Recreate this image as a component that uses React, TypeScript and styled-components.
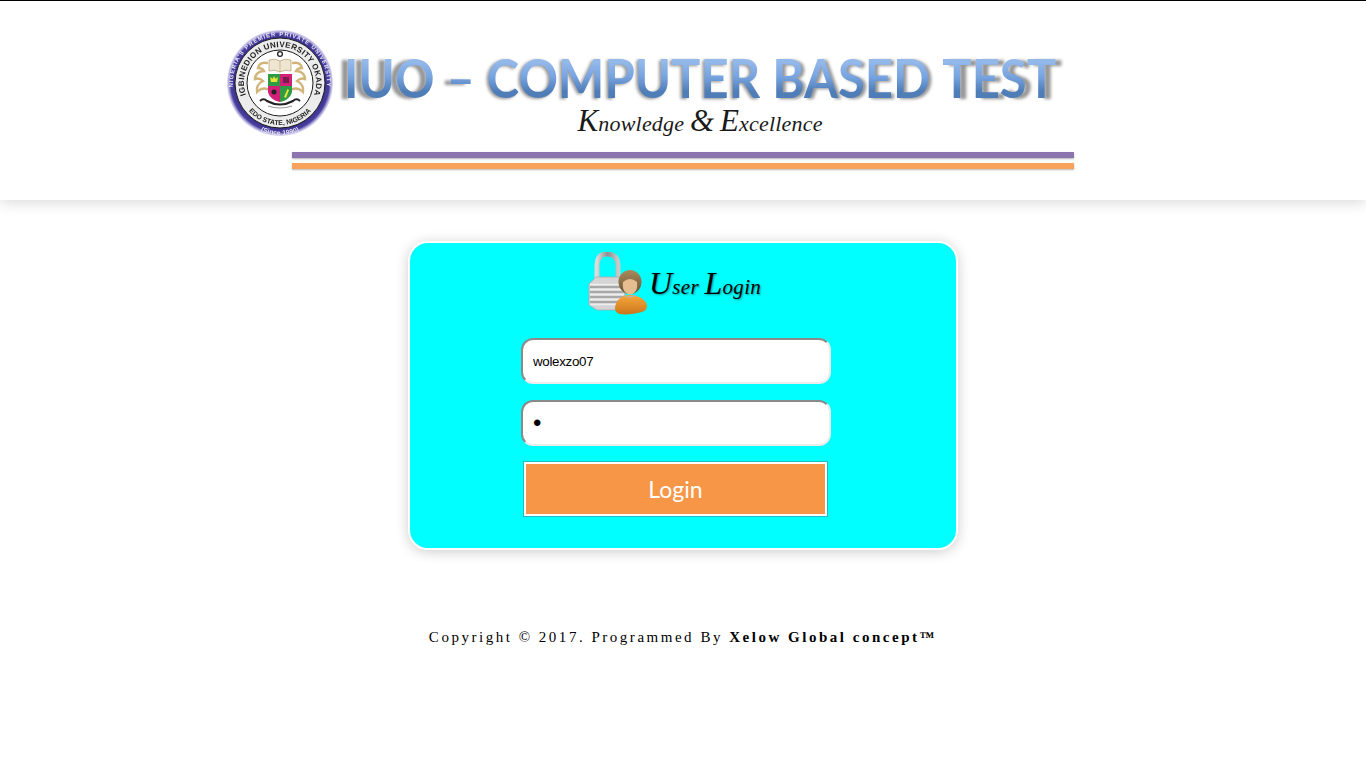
import React from 'react';
import styled, { createGlobalStyle } from 'styled-components';

const GlobalStyle = createGlobalStyle`
  html, body {
    margin: 0;
    padding: 0;
    background: #fff;
  }
  body {
    font-family: "Liberation Sans", Arial, sans-serif;
  }
`;

const Page = styled.div`
  min-height: 768px;
  border-top: 1px solid #000;
  box-sizing: border-box;
  overflow: hidden;
`;

const Header = styled.header`
  height: 199px;
  box-sizing: border-box;
  padding: 29px 0 0 227px;
  background: #fff;
  box-shadow: 0 2px 14px rgba(0, 0, 0, 0.16);
`;

const BannerRow = styled.div`
  display: flex;
  align-items: flex-start;
  gap: 11px;
`;

const TitleColumn = styled.div`
  display: flex;
  flex-direction: column;
  align-items: center;
  height: 117px;
  padding-top: 25px;
  box-sizing: border-box;
`;

const Title = styled.h1`
  display: flex;
  gap: 12px;
  margin: 0;
  font-family: Lato, "Open Sans", sans-serif;
  font-size: 49px;
  font-weight: 700;
  line-height: 44px;
  white-space: nowrap;
  transform: scaleY(1.1);
`;

const TitleWord = styled.span<{ $shift: number }>`
  background: linear-gradient(180deg, #93b8ea 20%, #77a3de 50%, #4f7db8 80%);
  -webkit-background-clip: text;
  background-clip: text;
  color: transparent;
  filter: drop-shadow(${({ $shift }) => $shift}px 1px 1.5px rgba(125, 125, 125, 0.8));
`;

const Tagline = styled.div`
  margin-top: 2px;
  font-family: "Liberation Serif", serif;
  font-style: italic;
  font-size: 22px;
  line-height: 40px;
  letter-spacing: 0.2px;
  color: #1a1a1a;
  white-space: nowrap;
`;

const TaglineCap = styled.span`
  font-size: 31px;
`;

const Rule = styled.div<{ $color: string; $gap: number }>`
  width: 782px;
  height: 6px;
  margin: ${({ $gap }) => $gap}px 0 0 65px;
  background: ${({ $color }) => $color};
  box-shadow: 0 1px 2px rgba(0, 0, 0, 0.3);
`;

const Card = styled.main`
  width: 550px;
  height: 309px;
  box-sizing: border-box;
  margin: 41px auto 0;
  padding: 9px 14px 0 0;
  display: flex;
  flex-direction: column;
  align-items: center;
  background: #0ff;
  border: 2px solid #fff;
  border-radius: 20px;
  box-shadow: 0 2px 13px rgba(0, 0, 0, 0.2);
`;

const Heading = styled.div`
  display: flex;
  align-items: center;
  gap: 2px;
  height: 64px;
  margin-left: -4px;
`;

const HeadingText = styled.h2`
  margin: 0 0 2px;
  font-family: "Liberation Serif", serif;
  font-style: italic;
  font-weight: 400;
  font-size: 21px;
  letter-spacing: 0.3px;
  color: #000;
  text-shadow: 1px 1px 2px rgba(0, 0, 0, 0.4);
  white-space: nowrap;
`;

const HeadingCap = styled.span`
  font-size: 32px;
`;

const Form = styled.form`
  display: flex;
  flex-direction: column;
  align-items: center;
  margin-top: 22px;
`;

const Field = styled.input<{ $mask?: boolean }>`
  width: 310px;
  height: 46px;
  box-sizing: border-box;
  margin: 0 0 16px;
  padding: 0 10px;
  font-family: "Liberation Sans", Arial, sans-serif;
  font-size: ${({ $mask }) => ($mask ? '24px' : '13.33px')};
  letter-spacing: ${({ $mask }) => ($mask ? '0' : '-0.3px')};
  color: #000;
  background: #fff;
  border: 2px solid;
  border-color: #8a8a8a #ececec #ececec #8a8a8a;
  border-radius: 12px;
  outline: none;
`;

const LoginButton = styled.button`
  width: 303px;
  height: 54px;
  box-sizing: border-box;
  display: block;
  margin-right: 1px;
  padding: 0;
  font-family: Lato, "Open Sans", sans-serif;
  font-size: 23px;
  color: #fff;
  background: #f79646;
  border: 2px solid #fff;
  box-shadow: 0 0 0 1px rgba(60, 130, 140, 0.55);
  cursor: pointer;
`;

const Footer = styled.footer`
  margin-top: 79px;
  text-align: center;
  font-family: "Liberation Serif", "Times New Roman", serif;
  font-size: 15px;
  line-height: 17px;
  letter-spacing: 2.52px;
  color: #000;
`;

const SealArt = styled.svg`
  flex: none;
  filter: blur(0.35px);
`;

const IconArt = styled.svg`
  flex: none;
  filter: blur(0.3px);
`;

const Seal = () => (
  <SealArt width="106" height="106" viewBox="0 0 106 106" aria-hidden="true">
    <defs>
      <radialGradient id="sealRing" cx="50%" cy="50%" r="50%">
        <stop offset="82%" stopColor="#352a86" />
        <stop offset="93%" stopColor="#4a40a0" />
        <stop offset="100%" stopColor="#a49ddb" stopOpacity="0.3" />
      </radialGradient>
      <path id="sealOuter" d="M53 100a47 47 0 1 1 0.01 0" />
      <path id="sealInner" d="M53 89a36 36 0 1 1 0.01 0" />
      <path id="sealLower" d="M53 11a42 42 0 1 0 0.01 0" />
      <path id="sealSince" d="M53 1a52 52 0 1 0 0.01 0" />
    </defs>
    <circle cx="53" cy="53" r="53" fill="url(#sealRing)" />
    <circle cx="53" cy="53" r="45" fill="#ececec" stroke="#1c1c1c" strokeWidth="1" />
    <circle cx="53" cy="53" r="33" fill="#fff" stroke="#1c1c1c" strokeWidth="1" />
    <text fontFamily="Liberation Sans" fontSize="5.800" fontWeight="700" fill="#e8e6f8" letterSpacing="1">
      <textPath href="#sealOuter" startOffset="50%" textAnchor="middle">NIGERIA&apos;S PREMIER PRIVATE UNIVERSITY</textPath>
    </text>
    <text fontFamily="Liberation Sans" fontSize="8" fontWeight="700" fill="#1c1c1c" letterSpacing="0.3">
      <textPath href="#sealInner" startOffset="50%" textAnchor="middle">IGBINEDION UNIVERSITY OKADA</textPath>
    </text>
    <text fontFamily="Liberation Sans" fontSize="6.800" fontWeight="700" fill="#1c1c1c">
      <textPath href="#sealLower" startOffset="50%" textAnchor="middle">EDO STATE, NIGERIA</textPath>
    </text>
    <text fontFamily="Liberation Sans" fontSize="6.800" fontWeight="700" fill="#e4e2f4">
      <textPath href="#sealSince" startOffset="50%" textAnchor="middle">(Since 1990)</textPath>
    </text>
    <circle cx="53" cy="24" r="2.400" fill="none" stroke="#222" strokeWidth="1.300" />
    <path d="M42 30q6-2 11 1q5-3 11-1v11q-6-2-11 1q-5-3-11-1z" fill="#efe6d2" stroke="#bba77e" strokeWidth="0.800" />
    <path d="M53 31v11" stroke="#bba77e" strokeWidth="0.700" />
    <g fill="none" stroke="#d2b57a" strokeWidth="2.400" strokeLinecap="round">
      <path d="M40 33c-5-1-8 1-9 5c3 0 5 1 6 3c-5 0-9 3-9 8c3-1 6 0 8 2c-4 2-7 6-6 11c3-3 7-4 10-3" />
      <path d="M66 33c5-1 8 1 9 5c-3 0-5 1-6 3c5 0 9 3 9 8c-3-1-6 0-8 2c4 2 7 6 6 11c-3-3-7-4-10-3" />
    </g>
    <path d="M41 44h12v12H41z" fill="#2e9b45" />
    <path d="M53 44h12v12H53z" fill="#d21f77" />
    <path d="M41 56h12v16c-6-1-11-5-12-10z" fill="#d21f77" />
    <path d="M53 56h12v6c-1 5-6 9-12 10z" fill="#2e9b45" />
    <path d="M44 52l-1-5l2.700 1.700L47 46l1.500 2.700L51 47l-1 5z" fill="#e8e337" />
    <path d="M56 47h6v6h-6z" fill="#7c1c4c" />
    <circle cx="47" cy="62" r="2.500" fill="#222" />
    <path d="M57 67l3.500-8l1.500 1l-3 8z" fill="#e8e337" />
    <path d="M33 71c3-3 5-2 7 0q13 7 26 0c2-2 4-3 7 0" fill="none" stroke="#222" strokeWidth="2" />
    <path d="M41 76q12 4 24 0" fill="none" stroke="#999" strokeWidth="1.200" />
  </SealArt>
);

const LockUserIcon = () => (
  <IconArt width="60" height="64" viewBox="0 0 60 64" aria-hidden="true">
    <defs>
      <linearGradient id="shackle" x1="0" x2="1" y1="0" y2="0">
        <stop offset="0" stopColor="#dcdcdc" />
        <stop offset="0.5" stopColor="#8f8f8f" />
        <stop offset="1" stopColor="#c9c9c9" />
      </linearGradient>
      <linearGradient id="shirt" x1="0" x2="0" y1="0" y2="1">
        <stop offset="0" stopColor="#f7a83c" />
        <stop offset="1" stopColor="#c9761a" />
      </linearGradient>
      <linearGradient id="hair" x1="0" x2="0" y1="0" y2="1">
        <stop offset="0" stopColor="#a98a5c" />
        <stop offset="1" stopColor="#6b5233" />
      </linearGradient>
    </defs>
    <path d="M10 28V14C10 5 14 2 20 2s11 3 11 12v14" fill="none" stroke="url(#shackle)" strokeWidth="5" />
    <path d="M2 32l7-7h22l7 5v23l-8 5H10l-8-5z" fill="#d4d4d4" stroke="#a9a9a9" strokeWidth="0.800" />
    <path d="M3 35h34M3 40h34M3 45h34M3 50h34" stroke="#a8a8a8" strokeWidth="2" />
    <path d="M3 32.500h34M3 37.500h34M3 42.500h34M3 47.500h34M3 52.500h34" stroke="#ededed" strokeWidth="1.500" />
    <ellipse cx="43" cy="30" rx="11.500" ry="12" fill="url(#hair)" />
    <path d="M36 30q7-6 14 0q1 8-3 11q-4 3-8 0q-4-3-3-11z" fill="#e6bd90" />
    <path d="M28 57c0-9 7-14 15-14s17 5 17 11c0 3-2 5-5 6c-8 2-16 3-22 2c-3-.5-5-3-5-5z" fill="url(#shirt)" />
    <path d="M37 43q6 4 12 0" fill="none" stroke="#b5b5b5" strokeWidth="1.500" />
  </IconArt>
);

export default function App() {
  return (
    <>
      <GlobalStyle />
      <Page>
        <Header>
          <BannerRow>
            <Seal />
            <TitleColumn>
              <Title>
                <TitleWord $shift={-6}>IUO –</TitleWord>
                <TitleWord $shift={-2}>COMPUTER</TitleWord>
                <TitleWord $shift={3}>BASED</TitleWord>
                <TitleWord $shift={6}>TEST</TitleWord>
              </Title>
              <Tagline>
                <TaglineCap>K</TaglineCap>nowledge <TaglineCap>&amp;</TaglineCap> <TaglineCap>E</TaglineCap>xcellence
              </Tagline>
            </TitleColumn>
          </BannerRow>
          <Rule $color="#8c74ae" $gap={5} />
          <Rule $color="#f8a25b" $gap={5} />
        </Header>
        <Card>
          <Heading>
            <LockUserIcon />
            <HeadingText>
              <HeadingCap>U</HeadingCap>ser <HeadingCap>L</HeadingCap>ogin
            </HeadingText>
          </Heading>
          <Form onSubmit={(e) => e.preventDefault()}>
            <Field type="text" defaultValue="wolexzo07" />
            <Field $mask type="password" defaultValue="x" />
            <LoginButton type="submit">Login</LoginButton>
          </Form>
        </Card>
        <Footer>
          Copyright © 2017. Programmed By <b>Xelow Global concept™</b>
        </Footer>
      </Page>
    </>
  );
}
